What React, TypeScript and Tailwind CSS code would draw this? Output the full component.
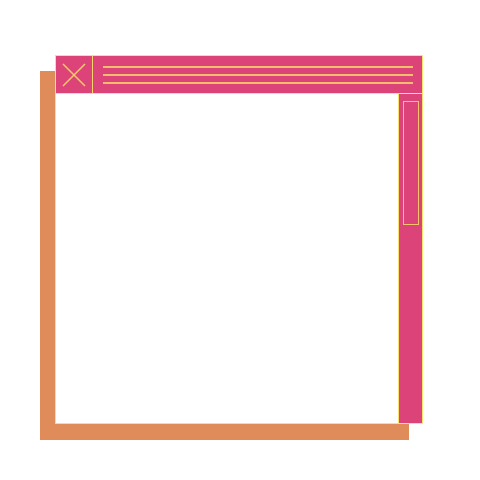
export default function App() {
  return (
    <div className="h-[480px] w-[480px] bg-white pl-[55px] pt-[55px]">
      <div className="relative h-[369px] w-[368px]">
        {/* drop shadow sits behind the window */}
        <div className="absolute left-[-15px] top-[16px] h-[369px] w-[369px] bg-[#e08c5a]" />
        <div className="relative flex h-full w-full flex-col border-[1.5px] border-[#f9e36e] bg-white">
          <div className="flex h-[37px] bg-[#dc4479]">
            <div className="flex w-[37px] items-center justify-center border-r-[1.5px] border-[#f7d56b]">
              <svg width="24" height="24" viewBox="0 0 24 24" fill="none">
                <path d="M1 1 L23 23 M23 1 L1 23" stroke="#f7c96b" strokeWidth="1.5" />
              </svg>
            </div>
            <div className="flex flex-1 flex-col justify-center gap-[6px] pl-[10px] pr-[9px]">
              <div className="h-[2px] bg-[#f3bd6f]" />
              <div className="h-[2px] bg-[#f3bd6f]" />
              <div className="h-[2px] bg-[#f3bd6f]" />
            </div>
          </div>
          <div className="flex flex-1 border-t-[1.5px] border-[#f9e36e]">
            <div className="flex-1 bg-white" />
            <div className="w-[24px] border-l-[1.5px] border-[#f9e36e] bg-[#dc4479] px-[3.5px] pt-[6.5px]">
              <div className="h-[124px] border-[1.5px] border-[#f5c46a]" />
            </div>
          </div>
        </div>
      </div>
    </div>
  );
}
